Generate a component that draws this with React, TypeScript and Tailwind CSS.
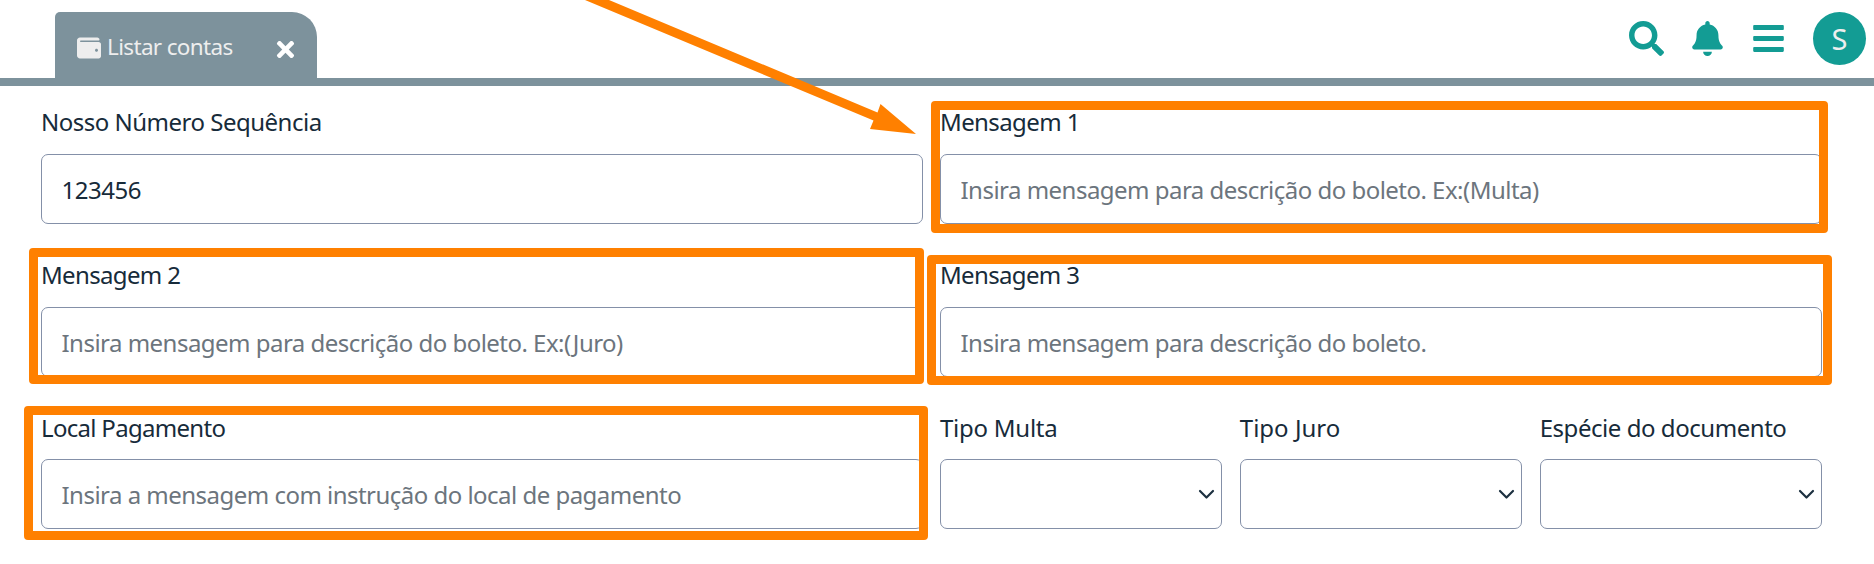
import React from "react";
import { FaBars, FaBell, FaSearch, FaTimes, FaWallet } from "react-icons/fa";

const labelClass = "flex items-center whitespace-nowrap text-[24px] leading-none text-[#172b3a]";
const controlClass = "h-[70px] w-full rounded-[7px] border border-[#8490a8] bg-white";

function TextField({ label, labelTracking, tracking, value, placeholder, mark, className, labelHeight = "h-[39px] mb-[13px]" }: {
  label: string;
  labelTracking: string;
  tracking: string;
  value?: string;
  placeholder?: string;
  mark?: string;
  className?: string;
  labelHeight?: string;
}) {
  return (
    <div className={`relative ${className ?? ""}`}>
      <label className={`${labelClass} ${labelHeight} ${labelTracking}`}>{label}</label>
      <input
        className={`${controlClass} block px-[19.5px] text-[24px] text-[#172b3a] placeholder:text-[#6c757d] ${tracking}`}
        defaultValue={value}
        placeholder={placeholder}
      />
      {mark && <div className={`pointer-events-none absolute rounded-[4px] border-[9px] border-[#ff8000] ${mark}`} />}
    </div>
  );
}

function SelectField({ label, tracking }: { label: string; tracking: string }) {
  return (
    <div>
      <label className={`${labelClass} mb-[11px] h-[41px] ${tracking}`}>{label}</label>
      <div className={`${controlClass} flex items-center justify-end pr-[6px]`}>
        <svg width="17" height="11" viewBox="0 0 17 11" fill="none" stroke="#1d3140" strokeWidth="2.2" strokeLinecap="round" strokeLinejoin="round">
          <path d="M2 2l6.5 6.5L15 2" />
        </svg>
      </div>
    </div>
  );
}

export default function App() {
  return (
    <div className="relative h-[564px] w-[1874px] overflow-hidden bg-white font-['Noto_Sans','Open_Sans',sans-serif]">
      <header className="flex h-[86px] items-start justify-between border-b-8 border-[#7d929c] pt-3">
        <div className="ml-[55px] flex h-[66px] w-[262px] items-center rounded-tl-[5px] rounded-tr-[25px] bg-[#7d929c] pl-[22px] text-[#eeeeee]">
          <FaWallet className="mt-[5px] size-6" />
          <span className="ml-1.5 w-[166px] whitespace-nowrap pt-[5px] text-[22.5px] leading-none tracking-[-0.65px]">Listar contas</span>
          <FaTimes className="mt-2 size-[25px] text-white" />
        </div>
        <div className="flex items-center pr-2 text-[#139c94]">
          <FaSearch className="size-[35px]" />
          <FaBell className="ml-[26px] size-[35px]" />
          <FaBars className="ml-[26px] size-[35px]" />
          <div className="ml-[27px] flex size-[53px] items-center justify-center rounded-full bg-[#139c94] text-[29px] leading-none text-[#eeeeee]">S</div>
        </div>
      </header>
      <main className="mt-4 ml-[41px] grid w-[1781px] grid-cols-2 gap-x-[17px] gap-y-[31px]">
        <TextField label="Nosso Número Sequência" labelTracking="tracking-[-0.5px]" value="123456" tracking="tracking-[-0.5px]" />
        <TextField label="Mensagem 1" labelTracking="tracking-[-0.6px]" placeholder="Insira mensagem para descrição do boleto. Ex:(Multa)" tracking="tracking-[-0.52px]" mark="-left-[9px] -top-px h-[132px] w-[897px]" />
        <TextField label="Mensagem 2" labelTracking="tracking-[-0.65px]" placeholder="Insira mensagem para descrição do boleto. Ex:(Juro)" tracking="tracking-[-0.52px]" mark="-left-[12px] -top-[7px] h-[136px] w-[895px]" />
        <TextField label="Mensagem 3" labelTracking="tracking-[-0.65px]" placeholder="Insira mensagem para descrição do boleto." tracking="tracking-[-0.52px]" mark="-left-[13px] top-0 h-[130px] w-[905px]" />
        <TextField className="-mt-px" labelHeight="h-[41px] mb-[11px]" label="Local Pagamento" labelTracking="tracking-[-0.7px]" placeholder="Insira a mensagem com instrução do local de pagamento" tracking="tracking-[-0.52px]" mark="-left-[17px] -top-px h-[134px] w-[904px]" />
        <div className="-mt-px grid grid-cols-3 gap-[17.5px]">
          <SelectField label="Tipo Multa" tracking="tracking-[-0.25px]" />
          <SelectField label="Tipo Juro" tracking="tracking-normal" />
          <SelectField label="Espécie do documento" tracking="tracking-[-0.45px]" />
        </div>
      </main>
      <svg className="pointer-events-none absolute top-0 left-0" width="940" height="150" fill="#ff8000">
        <path d="M585 0H609L877.5 112.5L880.5 104L916 134L870 129L873.5 120.5Z" />
      </svg>
    </div>
  );
}
